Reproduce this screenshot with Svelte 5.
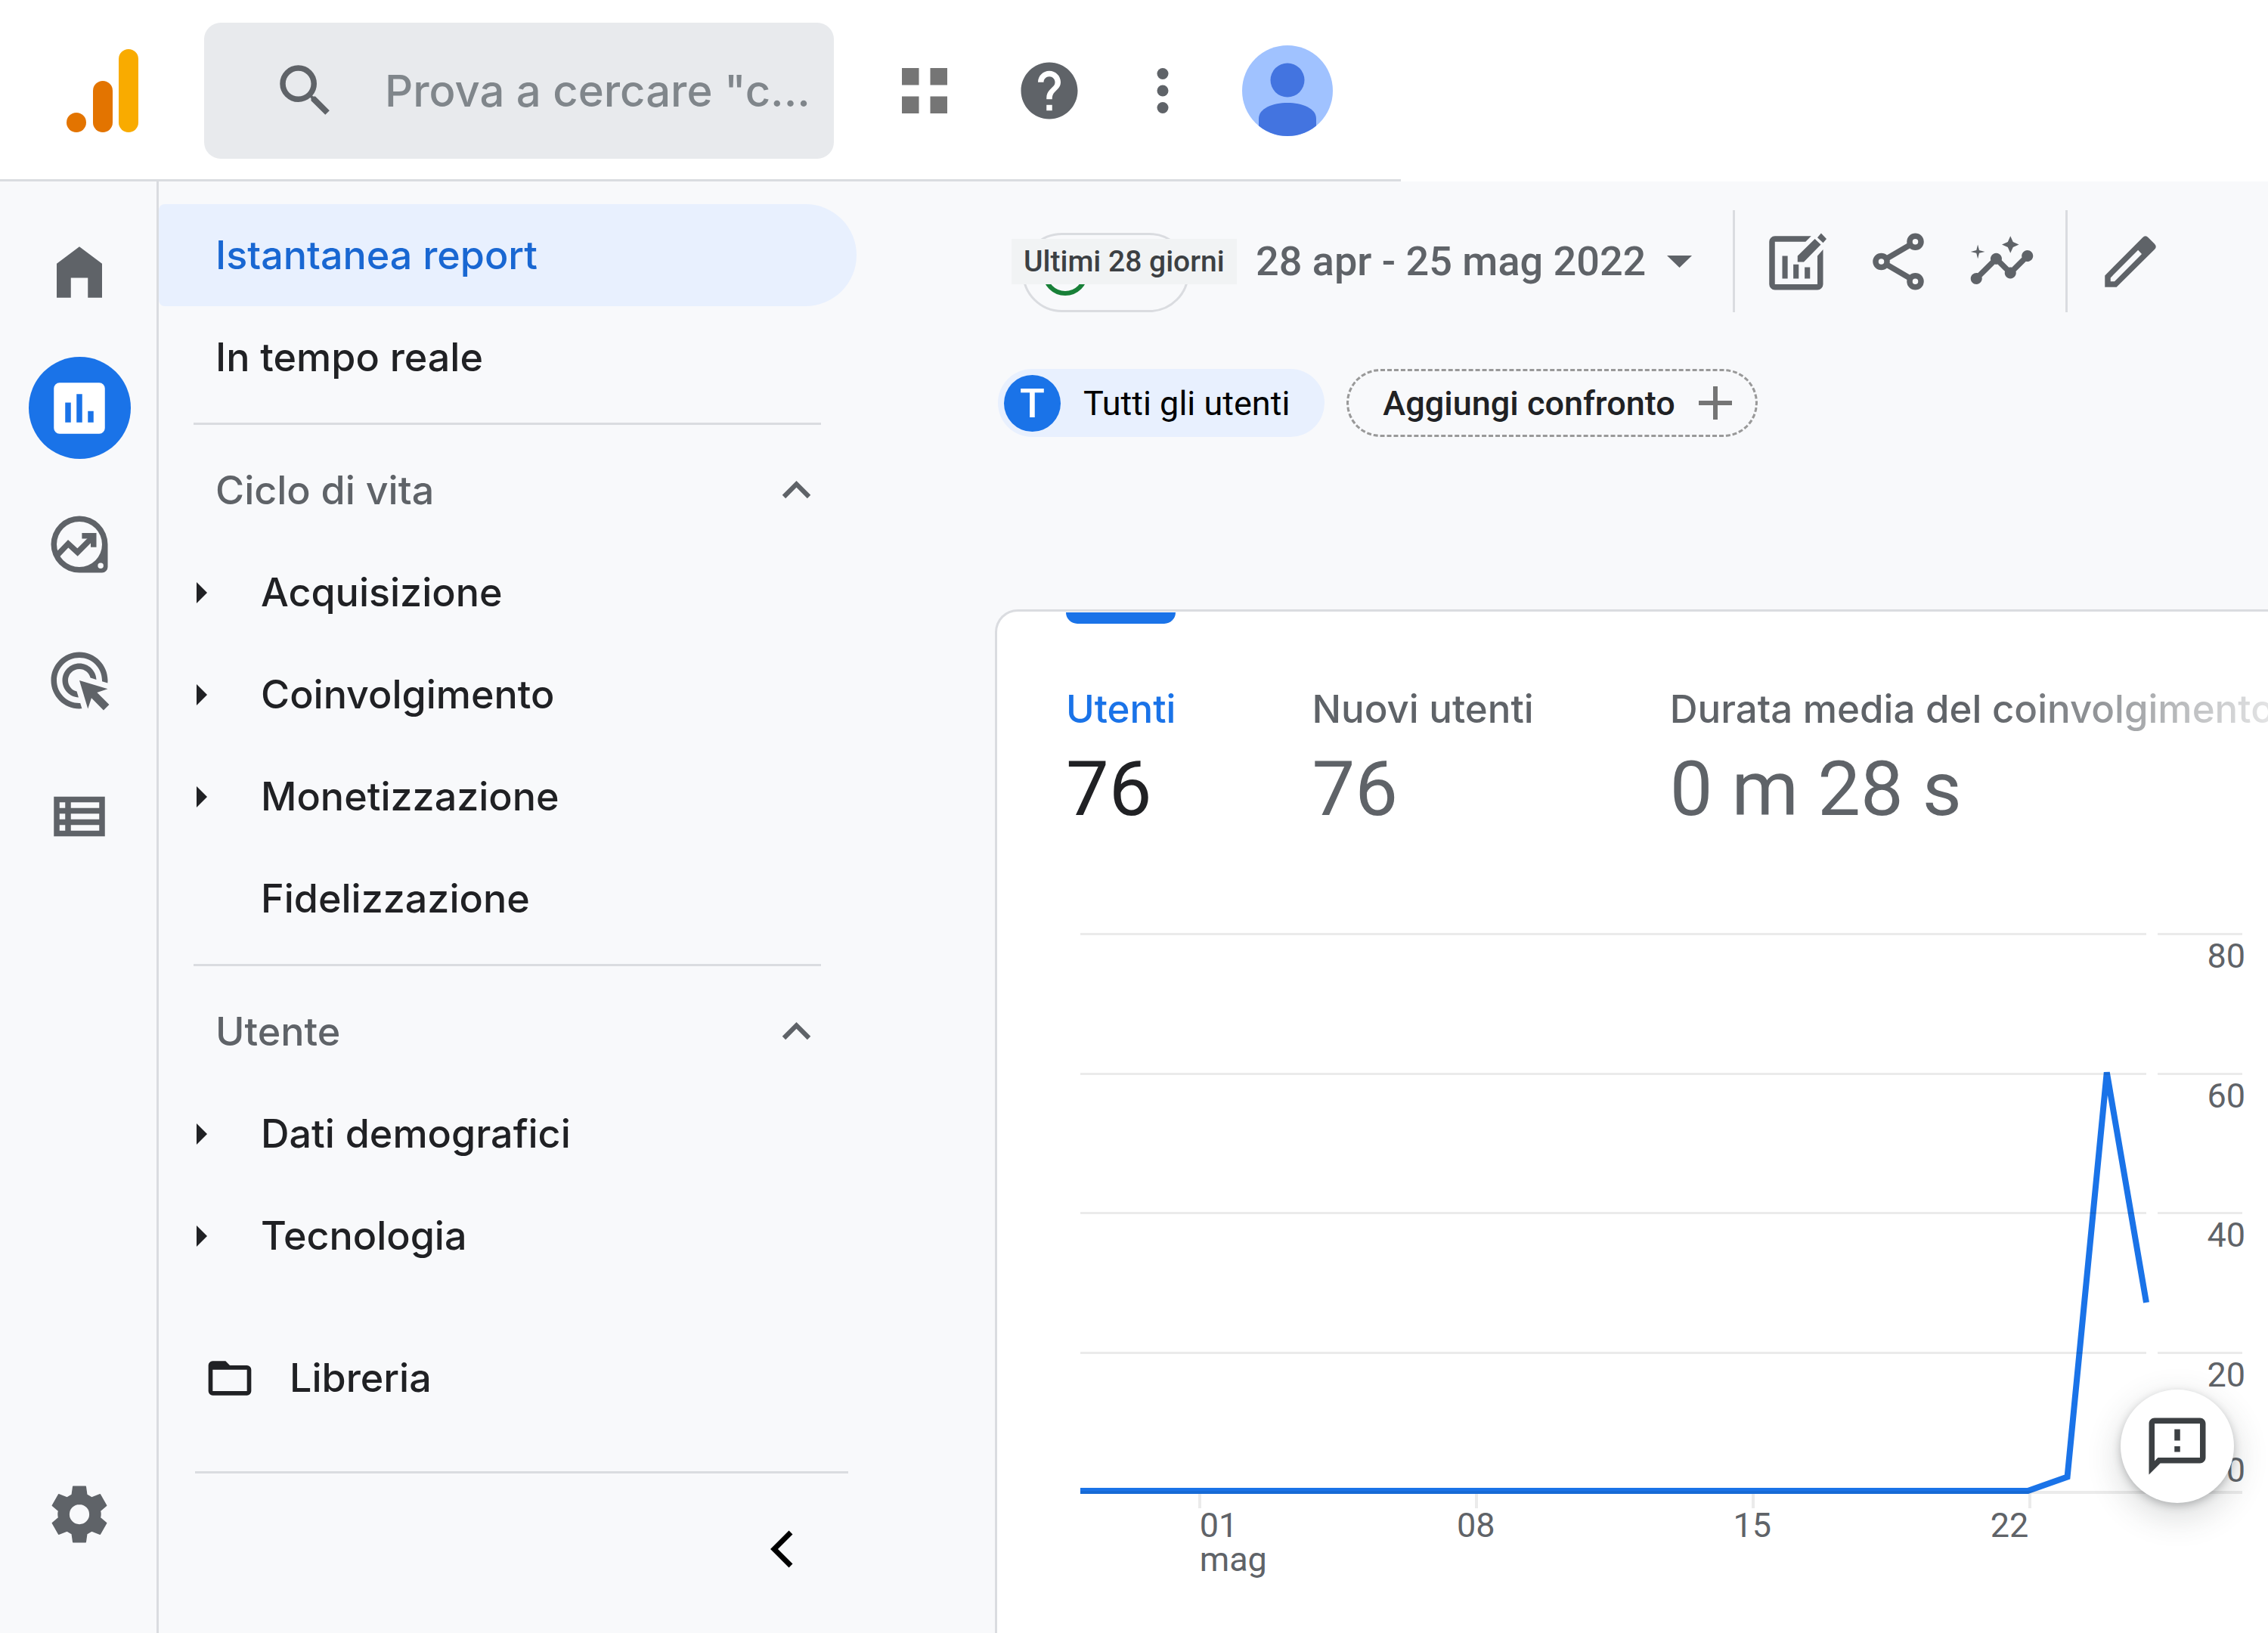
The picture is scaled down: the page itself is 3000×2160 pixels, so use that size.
<script>
  const sections = [
    {
      title: 'Ciclo di vita',
      items: [
        { label: 'Acquisizione', nested: true },
        { label: 'Coinvolgimento', nested: true },
        { label: 'Monetizzazione', nested: true },
        { label: 'Fidelizzazione', nested: false }
      ]
    },
    {
      title: 'Utente',
      items: [
        { label: 'Dati demografici', nested: true },
        { label: 'Tecnologia', nested: true }
      ]
    }
  ];

  const metrics = [
    { label: 'Utenti', value: '76' },
    { label: 'Nuovi utenti', value: '76' },
    { label: 'Durata media del coinvolgimento', value: '0 m 28 s' }
  ];
  let active = $state(0);

  // Daily users, 28 April to 25 May
  const users = [...Array(25).fill(0), 2, 60, 27];
  const yMax = 80;
  const yLabels = [80, 60, 40, 20];
  const xLabels = [
    { day: 3, text: '01 mag', align: 'start' },
    { day: 10, text: '08', align: 'center' },
    { day: 17, text: '15', align: 'center' },
    { day: 24, text: '22', align: 'end' }
  ];
  const points = users.map((v, i) => `${i},${yMax - v}`).join(' ');

  function columns({ day, align }) {
    if (align === 'start') return `${day + 1} / span 2`;
    if (align === 'end') return `${day - 1} / span 2`;
    return `${day} / span 2`;
  }
</script>

<div class="app">
  <header>
    <div class="topbar">
      <a class="logo" href="#analytics" aria-label="Analytics">
        <svg viewBox="0 0 96 110">
          <circle cx="13" cy="97" r="13" fill="#e37400" />
          <rect x="35" y="42" width="26" height="68" rx="13" fill="#e37400" />
          <rect x="69" width="26" height="110" rx="13" fill="#f9ab00" />
        </svg>
      </a>
      <label class="search">
        <svg class="icon" viewBox="0 0 24 24"><path d="M15.5 14h-.79l-.28-.27A6.47 6.47 0 0 0 16 9.5 6.5 6.5 0 1 0 9.5 16c1.61 0 3.09-.59 4.23-1.57l.27.28v.79l5 4.99L20.49 19l-4.99-5zm-6 0C7.01 14 5 11.99 5 9.5S7.01 5 9.5 5 14 7.01 14 9.5 11.99 14 9.5 14z" /></svg>
        <input type="text" aria-label="Cerca" placeholder={'Prova a cercare "c...'} />
      </label>
      <div class="tools">
        <button class="apps" aria-label="App">
          <svg class="icon grey" viewBox="0 0 24 24"><path d="M4 4h6v6H4zM14 4h6v6h-6zM4 14h6v6H4zM14 14h6v6h-6z" /></svg>
        </button>
        <button aria-label="Guida">
          <svg class="icon" viewBox="0 0 24 24"><path d="M12 2C6.48 2 2 6.48 2 12s4.48 10 10 10 10-4.480 10-10S17.520 2 12 2zm1 17h-2v-2h2v2zm2.070-7.750-.9.920C13.450 12.900 13 13.500 13 15h-2v-.5c0-1.100.45-2.100 1.170-2.830l1.240-1.260c.37-.36.59-.86.59-1.410 0-1.100-.9-2-2-2s-2 .9-2 2H8c0-2.210 1.790-4 4-4s4 1.790 4 4c0 .88-.36 1.680-.93 2.250z" /></svg>
        </button>
        <button aria-label="Altro">
          <svg class="icon" viewBox="0 0 24 24"><circle cx="12" cy="6" r="2" /><circle cx="12" cy="12" r="2" /><circle cx="12" cy="18" r="2" /></svg>
        </button>
        <button class="avatar" aria-label="Account">
          <svg viewBox="0 0 120 120">
            <rect width="120" height="120" fill="#a0c2ff" />
            <circle cx="60" cy="46" r="22.5" fill="#4374e0" />
            <path d="M22 125V97c0-14 19-21 38-21s38 7 38 21v28z" fill="#4374e0" />
          </svg>
        </button>
      </div>
    </div>
  </header>

  <div class="body">
    <nav class="rail" aria-label="Principale">
      <a href="#home" aria-label="Home page">
        <svg class="icon" viewBox="0 0 24 24"><path d="M4 21V9l8-6 8 6v12h-5v-7H9v7z" /></svg>
      </a>
      <a href="#report" aria-label="Report" class="current">
        <svg class="icon" viewBox="0 0 24 24"><path fill-rule="evenodd" d="M5 3h14a2 2 0 0 1 2 2v14a2 2 0 0 1-2 2H5a2 2 0 0 1-2-2V5a2 2 0 0 1 2-2zM7 10v7h2v-7zM11 7v10h2V7zM15 13v4h2v-4z" /></svg>
      </a>
      <a href="#esplora" aria-label="Esplora">
        <svg class="icon" viewBox="0 0 24 24">
          <path fill-rule="evenodd" d="M12 2a10 10 0 0 1 10 10v8a2 2 0 0 1-2 2h-8a10 10 0 0 1 0-20zM12 4a8 8 0 1 0 0 16 8 8 0 0 0 0-16zM19.500 18.500a1 1 0 1 0 0 2 1 1 0 0 0 0-2z" />
          <path d="M4.300 15.700 8.050 11.800l3.300 3 5.500-5.500" fill="none" stroke="currentColor" stroke-width="2" />
          <path d="M12.900 8H18v5h-2v-3h-3.100z" />
        </svg>
      </a>
      <a href="#pubblicita" aria-label="Pubblicità">
        <svg class="icon" viewBox="0 0 24 24"><path d="M11.710 17.990C8.530 17.840 6 15.220 6 12c0-3.310 2.690-6 6-6 3.220 0 5.840 2.530 5.990 5.710l-2.100-.63C15.480 9.310 13.890 8 12 8c-2.210 0-4 1.790-4 4 0 1.890 1.310 3.480 3.080 3.890zM22 12c0 .3-.01.6-.04.9l-1.970-.59c.01-.1.01-.21.01-.31 0-4.420-3.580-8-8-8s-8 3.580-8 8 3.580 8 8 8c.1 0 .21 0 .31-.01l.59 1.970c-.3.03-.6.04-.9.04C6.480 22 2 17.520 2 12S6.480 2 12 2s10 4.480 10 10zM18.230 16.260 22 15l-10-3 3 10 1.260-3.770 4.270 4.270 1.980-1.980z" /></svg>
      </a>
      <a href="#configura" aria-label="Configura">
        <svg class="icon" viewBox="0 0 24 24"><path fill-rule="evenodd" d="M3 5h18v14H3zM5 7v2h2V7zM9 7v2h10V7zM5 11v2h2v-2zM9 11v2h10v-2zM5 15v2h2v-2zM9 15v2h10v-2z" /></svg>
      </a>
      <a href="#amministrazione" aria-label="Amministrazione" class="admin">
        <svg class="icon" viewBox="0 0 24 24"><path fill-rule="evenodd" stroke="currentColor" stroke-width=".4" stroke-linejoin="round" d="M9.800 2.200h4.400l.4 2.900 1.800 1.050 2.900-1.150 2.200 3.900-2.200 1.900q.3 1.200 0 2.400l2.200 1.900-2.200 3.900-2.900-1.150-1.800 1.050-.4 2.900H9.800l-.4-2.900-1.800-1.050L4.700 19l-2.200-3.900 2.200-1.900q-.3-1.200 0-2.400L2.500 8.900 4.700 5l2.900 1.150L9.400 5.100zM12 8.300a3.700 3.700 0 1 0 0 7.400 3.700 3.700 0 0 0 0-7.400z" /></svg>
      </a>
    </nav>

    <nav class="drawer" aria-label="Report">
      <a class="item selected" href="#istantanea">Istantanea report</a>
      <a class="item" href="#tempo-reale">In tempo reale</a>
      {#each sections as section}
        <hr />
        <button class="item heading" aria-expanded="true">
          {section.title}
          <svg class="chevron" viewBox="0 0 24 24"><path d="M12 8l-6 6 1.410 1.410L12 10.830l4.590 4.580L18 14z" /></svg>
        </button>
        {#each section.items as item}
          <a class="item sub" href="#{item.label}">
            <svg class="caret" class:hidden={!item.nested} viewBox="0 0 14 28"><path d="M0 0l14 14L0 28z" /></svg>
            {item.label}
          </a>
        {/each}
      {/each}
      <a class="item library" href="#libreria">
        <svg viewBox="0 0 24 24"><path fill-rule="evenodd" d="M4 4h6l2 2h8a2 2 0 0 1 2 2v10a2 2 0 0 1-2 2H4a2 2 0 0 1-2-2V6a2 2 0 0 1 2-2zM4 8v10h16V8z" /></svg>
        Libreria
      </a>
      <hr class="last" />
      <button class="collapse" aria-label="Comprimi">
        <svg viewBox="0 0 30 50"><path d="M27 3 5 25l22 22" /></svg>
      </button>
    </nav>

    <main>
      <div class="toolbar">
        <div class="status">
          <svg viewBox="0 0 60 60"><circle cx="30" cy="30" r="27" /><path d="M18 31l8 8 16-17" /></svg>
          <span class="tip">Ultimi 28 giorni</span>
        </div>
        <button class="date">
          28 apr - 25 mag 2022
          <svg viewBox="0 0 33 16"><path d="M0 0h33L16.500 16z" /></svg>
        </button>
        <div class="actions">
          <button aria-label="Personalizza report">
            <svg class="icon" viewBox="0 0 24 24">
              <path d="M17.800 3 15.800 5H5v15h15V10l2-2.300V20a2 2 0 0 1-2 2H5a2 2 0 0 1-2-2V5a2 2 0 0 1 2-2z" />
              <path d="M7.600 10h1.900v8H7.600zM11.500 13h1.900v5h-1.900zM15.500 14h1.900v4h-1.900zM19.100 4l2.100 2-6 6.100H13V10zM21.300 2l1.900 2-1.200 1.400-2-1.900z" />
            </svg>
          </button>
          <button aria-label="Condividi">
            <svg class="icon" viewBox="0 0 24 24"><g fill="none" stroke="currentColor" stroke-width="2"><circle cx="18" cy="5" r="2" /><circle cx="6" cy="12" r="2" /><circle cx="18" cy="19" r="2" /><path d="M16 6.200 7.800 11M7.800 13l8.200 4.800" /></g></svg>
          </button>
          <button aria-label="Approfondimenti">
            <svg class="icon" viewBox="0 0 24 24"><path d="M21 8c-1.450 0-2.260 1.440-1.930 2.510l-3.550 3.560c-.3-.09-.74-.09-1.040 0l-2.550-2.550C12.270 10.450 11.460 9 10 9c-1.450 0-2.270 1.440-1.930 2.520l-4.560 4.550C2.440 15.740 1 16.550 1 18c0 1.100.9 2 2 2 1.450 0 2.260-1.440 1.930-2.510l4.550-4.560c.3.09.74.09 1.040 0l2.550 2.550C12.730 16.550 13.540 18 15 18c1.450 0 2.270-1.440 1.930-2.520l3.560-3.550C21.560 12.260 23 11.450 23 10c0-1.100-.9-2-2-2zM15 9l.94-2.070L18 6l-2.060-.93L15 3l-.92 2.070L12 6l2.080.93zM3.500 11 4 9l2-.5L4 8l-.5-2L3 8l-2 .5L3 9z" /></svg>
          </button>
          <button aria-label="Modifica">
            <svg class="icon" viewBox="0 0 24 24"><path fill-rule="evenodd" d="M3 16.900 16.300 3.500q1-1 2 0l2.200 2.200q1 1 0 2L7.100 21H3zM14.700 7.900 5 17.700V19h1.400L16 9.300z" /></svg>
          </button>
        </div>
      </div>

      <div class="chips">
        <button class="chip"><span class="badge">T</span>Tutti gli utenti</button>
        <button class="chip add">
          Aggiungi confronto
          <svg viewBox="0 0 44 44"><path d="M22 0v44M0 22h44" /></svg>
        </button>
      </div>

      <section class="card">
        <div class="metrics" role="tablist">
          {#each metrics as metric, i}
            <button class="metric" class:on={i === active} role="tab" aria-selected={i === active} onclick={() => (active = i)}>
              <span class="name">{metric.label}</span>
              <span class="value">{metric.value}</span>
            </button>
          {/each}
        </div>

        <div class="chart">
          <svg class="line" viewBox="0 0 27 80" preserveAspectRatio="none" role="img" aria-label="Utenti per giorno">
            <polyline {points} vector-effect="non-scaling-stroke" />
          </svg>
          <div class="rows">
            {#each yLabels as _}<i></i>{/each}
          </div>
          <div class="rows scale">
            {#each yLabels as y, i}
              <i><span>{y}</span>{#if i === yLabels.length - 1}<span>0</span>{/if}</i>
            {/each}
          </div>
          <div class="baseline"></div>
          <div class="days">
            {#each xLabels as x}
              <i class="tick" style:grid-column={x.day + 1}></i>
              <span class={x.align} style:grid-column={columns(x)}>{#each x.text.split(' ') as part}<b>{part}</b>{/each}</span>
            {/each}
          </div>
        </div>
      </section>
    </main>
  </div>

  <button class="feedback" aria-label="Invia feedback">
    <svg class="icon" viewBox="0 0 24 24"><path d="M20 2H4c-1.100 0-1.990.9-1.990 2L2 22l4-4h14c1.100 0 2-.9 2-2V4c0-1.100-.9-2-2-2zm0 14H5.170L4 17.170V4h16v12zm-9-4h2v2h-2zm0-6h2v4h-2z" /></svg>
  </button>
</div>

<style>
  :global(body) {
    margin: 0;
    background: #f8f9fb;
  }

  .app {
    --sans: Inter, 'Open Sans', sans-serif;
    --line: #dadce0;
    --blue: #1a73e8;
    display: flex;
    flex-direction: column;
    min-height: 100vh;
    overflow: hidden;
    color: #202124;
    font-family: var(--sans);
    font-size: 52px;
    font-weight: 500;
    background: #f8f9fb;
  }

  .app * {
    box-sizing: border-box;
  }

  button {
    padding: 0;
    border: 0;
    background: none;
    color: inherit;
    font: inherit;
    text-align: left;
    cursor: pointer;
  }

  a {
    color: inherit;
    text-decoration: none;
  }

  svg {
    display: block;
    flex: none;
    fill: currentColor;
  }

  .icon {
    width: 90px;
    height: 90px;
    color: #5f6368;
  }

  .icon.grey {
    color: #757575;
  }

  header {
    background: #fff;
  }

  .topbar {
    display: flex;
    align-items: center;
    max-width: 1853px;
    height: 240px;
    padding: 3px 90px 0 88px;
    border-bottom: 3px solid var(--line);
  }

  .logo svg {
    width: 96px;
    height: 110px;
  }

  .search {
    display: flex;
    flex: 1;
    align-items: center;
    gap: 60px;
    min-width: 0;
    height: 180px;
    margin-left: 86px;
    padding-left: 89px;
    border-radius: 22px;
    background: #e8eaed;
  }

  .search input {
    flex: 1;
    min-width: 0;
    padding: 0;
    border: 0;
    outline: 0;
    background: none;
    color: #202124;
    font: 500 58px var(--sans);
  }

  .search input::placeholder {
    color: #80868b;
    opacity: 1;
  }

  .tools {
    display: flex;
    align-items: center;
    gap: 60px;
    margin-left: 75px;
  }

  .apps {
    margin-right: 15px;
  }

  .avatar {
    overflow: hidden;
    border-radius: 50%;
  }

  .avatar svg {
    width: 120px;
    height: 120px;
  }

  .body {
    display: flex;
    flex: 1;
  }

  .rail {
    display: flex;
    flex: none;
    flex-direction: column;
    align-items: center;
    gap: 45px;
    width: 210px;
    padding: 52px 0 90px 3px;
    border-right: 3px solid var(--line);
  }

  .rail a {
    display: grid;
    place-items: center;
    width: 135px;
    height: 135px;
    border-radius: 50%;
  }

  .rail .current {
    background: var(--blue);
  }

  .rail .current .icon {
    color: #fff;
  }

  .rail .admin {
    margin-top: auto;
  }

  .drawer {
    flex: none;
    width: 923px;
    padding-top: 30px;
  }

  .item {
    display: flex;
    align-items: center;
    width: 100%;
    height: 135px;
    padding-left: 75px;
    white-space: nowrap;
  }

  .selected {
    border-radius: 8px 68px 68px 8px;
    background: #e8f0fe;
    color: #1967d2;
  }

  .heading {
    justify-content: space-between;
    padding-right: 42px;
    color: #5f6368;
  }

  .chevron {
    width: 75px;
    height: 75px;
  }

  .sub {
    gap: 71px;
    padding-left: 50px;
  }

  .caret {
    width: 14px;
    height: 28px;
  }

  .hidden {
    visibility: hidden;
  }

  .library {
    gap: 45px;
    margin-top: 53px;
    padding-left: 60px;
  }

  .library svg {
    width: 68px;
    height: 68px;
  }

  hr {
    height: 3px;
    margin: 19px 47px 19px 46px;
    border: 0;
    background: var(--line);
  }

  hr.last {
    margin: 56px 11px 0 48px;
  }

  .collapse {
    display: block;
    margin: 75px 84px 0 auto;
  }

  .collapse svg {
    width: 30px;
    height: 50px;
  }

  .collapse path {
    fill: none;
    stroke: #000;
    stroke-width: 7;
  }

  main {
    display: flex;
    flex: 1;
    flex-direction: column;
    min-width: 0;
    padding: 38px 0 0 183px;
  }

  .toolbar {
    display: flex;
    align-items: center;
    height: 135px;
    padding: 0 137px 0 36px;
  }

  .status {
    position: relative;
    display: flex;
    align-items: center;
    align-self: flex-end;
    width: 221px;
    height: 105px;
    padding-left: 24px;
    border: 3px solid var(--line);
    border-radius: 53px;
  }

  .status svg {
    width: 60px;
    height: 60px;
  }

  .status circle,
  .status path {
    fill: none;
    stroke: #188038;
    stroke-width: 6;
  }

  .tip {
    position: absolute;
    top: 5px;
    left: -17px;
    width: max-content;
    padding: 0 16px;
    background: #f1f3f4;
    color: #3c4043;
    font: 500 39px/60px Roboto, sans-serif;
  }

  .date {
    display: flex;
    align-items: center;
    gap: 28px;
    margin-left: 88px;
    color: #5f6368;
    font: 500 54px Roboto, sans-serif;
    white-space: nowrap;
  }

  .date svg {
    width: 33px;
    height: 16px;
  }

  .actions {
    display: flex;
    align-items: center;
    gap: 47px;
    height: 100%;
    margin-left: auto;
    padding-left: 34px;
    border-left: 3px solid var(--line);
  }

  .actions button:last-child {
    display: flex;
    align-items: center;
    height: 100%;
    margin-left: -8px;
    padding-left: 38px;
    border-left: 3px solid var(--line);
  }

  .chips {
    display: flex;
    gap: 29px;
    margin: 75px 0 228px 4px;
  }

  .chip {
    display: flex;
    align-items: center;
    height: 90px;
    padding: 0 46px 0 8px;
    border-radius: 45px;
    background: #e8f0fe;
    color: #000;
    font: 400 45px Roboto, sans-serif;
    white-space: nowrap;
  }

  .badge {
    display: grid;
    place-items: center;
    width: 75px;
    height: 75px;
    margin-right: 30px;
    border-radius: 50%;
    background: var(--blue);
    color: #fff;
    font: 500 54px Roboto, sans-serif;
  }

  .add {
    gap: 31px;
    padding: 0 31px 0 45px;
    border: 3px dashed #999;
    background: none;
    color: #202124;
    font-weight: 500;
  }

  .add svg {
    width: 44px;
    height: 44px;
  }

  .add path {
    stroke: #757575;
    stroke-width: 6;
  }

  .card {
    flex: 1;
    padding-bottom: 60px;
    border: 3px solid var(--line);
    border-width: 3px 0 0 3px;
    border-radius: 30px 0 0;
    background: #fff;
  }

  .metrics {
    display: flex;
    gap: 180px;
    padding: 1px 0 0 91px;
  }

  .metric {
    position: relative;
    display: flex;
    flex: none;
    flex-direction: column;
    gap: 16px;
    padding-top: 90px;
    color: #5f6368;
    font-size: 51px;
    white-space: nowrap;
  }

  .metric:last-child {
    flex: 1;
    min-width: 0;
  }

  .metric:last-child .name {
    overflow: hidden;
    -webkit-mask-image: linear-gradient(90deg, #000 420px, transparent 870px);
    mask-image: linear-gradient(90deg, #000 420px, transparent 870px);
  }

  .name {
    line-height: 75px;
  }

  .value {
    font: 400 101px/105px Roboto, sans-serif;
  }

  .metric.on::before {
    content: '';
    position: absolute;
    inset: 0 0 auto;
    height: 15px;
    border-radius: 0 0 15px 15px;
    background: var(--blue);
  }

  .on .name {
    color: var(--blue);
  }

  .on .value {
    color: #202124;
  }

  .chart {
    display: grid;
    grid-template-columns: 1fr 112px;
    grid-template-rows: 738px 4px auto;
    column-gap: 15px;
    margin: 138px 34px 0 110px;
    color: #5f6368;
    font: 400 45px/45px Roboto, sans-serif;
  }

  .line {
    grid-area: 1 / 1;
    width: 100%;
    height: 100%;
    overflow: visible;
  }

  .line polyline {
    fill: none;
    stroke: var(--blue);
    stroke-width: 8;
  }

  .rows {
    z-index: 1;
    display: grid;
    grid-area: 1 / 1;
    grid-template-rows: repeat(4, 1fr);
  }

  .rows i {
    border-top: 3px solid rgba(0, 0, 0, 0.08);
    font-style: normal;
  }

  .scale {
    grid-column: 2;
  }

  .scale i {
    display: flex;
    flex-direction: column;
    align-items: flex-end;
    justify-content: space-between;
    padding: 5px 0;
  }

  .scale span {
    margin-right: -4px;
  }

  .baseline {
    z-index: 1;
    grid-area: 2 / 1 / 3 / 3;
    background: rgba(0, 0, 0, 0.08);
  }

  .days {
    display: grid;
    grid-area: 3 / 1;
    grid-template-columns: repeat(27, 1fr);
    grid-template-rows: 19px auto;
  }

  .tick {
    grid-row: 1;
    width: 4px;
    background: rgba(0, 0, 0, 0.08);
  }

  .days span {
    display: flex;
    flex-direction: column;
    grid-row: 2;
    width: 104px;
    margin-left: 2px;
  }

  .days .center {
    align-items: center;
  }

  .days .end {
    align-items: flex-end;
  }

  .days b {
    font-weight: 400;
  }

  .feedback {
    position: fixed;
    right: 45px;
    bottom: 172px;
    z-index: 2;
    display: grid;
    place-items: center;
    width: 150px;
    height: 150px;
    border-radius: 50%;
    background: #fff;
    box-shadow: 0 4px 11px rgba(60, 64, 67, 0.3), 0 15px 38px 8px rgba(60, 64, 67, 0.15);
  }

  .feedback .icon {
    color: #3c4043;
  }
</style>
